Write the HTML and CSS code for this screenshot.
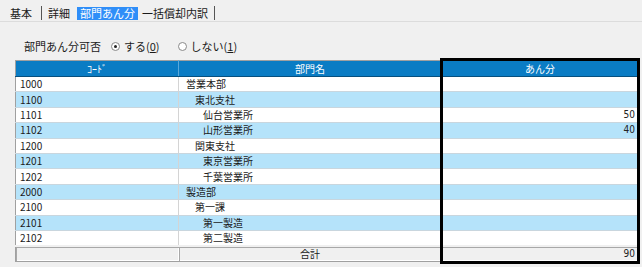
FILE: index.html
```html
<!DOCTYPE html>
<html lang="ja">
<head>
  <meta charset="UTF-8">
  <title>部門あん分</title>
  <link rel="stylesheet" href="styles.css">
</head>
<body>
  <!-- タブ -->
  <div class="tabs">
    <span class="tab">基本</span>
    <span class="tab-sep"></span>
    <span class="tab">詳細</span>
    <span class="tab active">部門あん分</span>
    <span class="tab">一括償却内訳</span>
    <span class="tab-sep"></span>
  </div>

  <div class="panel">
    <!-- あん分可否 -->
    <div class="option-row">
      <span class="option-label">部門あん分可否</span>
      <label class="radio"><span class="radio-mark checked"></span>する(<u>0</u>)</label>
      <label class="radio"><span class="radio-mark"></span>しない(<u>1</u>)</label>
    </div>

    <!-- 一覧 -->
    <div class="grid-wrap">
      <table class="grid">
        <colgroup>
          <col class="col-code">
          <col class="col-name">
          <col class="col-rate">
        </colgroup>
        <thead>
          <tr><th>ｺｰﾄﾞ</th><th>部門名</th><th>あん分</th></tr>
        </thead>
        <tbody>
          <tr><td>1000</td><td class="lv0">営業本部</td><td class="num"></td></tr>
          <tr><td>1100</td><td class="lv1">東北支社</td><td class="num"></td></tr>
          <tr><td>1101</td><td class="lv2">仙台営業所</td><td class="num">50</td></tr>
          <tr><td>1102</td><td class="lv2">山形営業所</td><td class="num">40</td></tr>
          <tr><td>1200</td><td class="lv1">関東支社</td><td class="num"></td></tr>
          <tr><td>1201</td><td class="lv2">東京営業所</td><td class="num"></td></tr>
          <tr><td>1202</td><td class="lv2">千葉営業所</td><td class="num"></td></tr>
          <tr><td>2000</td><td class="lv0">製造部</td><td class="num"></td></tr>
          <tr><td>2100</td><td class="lv1">第一課</td><td class="num"></td></tr>
          <tr><td>2101</td><td class="lv2">第一製造</td><td class="num"></td></tr>
          <tr><td>2102</td><td class="lv2">第二製造</td><td class="num"></td></tr>
        </tbody>
        <tfoot>
          <tr><td></td><td class="center">合計</td><td class="num">90</td></tr>
        </tfoot>
      </table>
      <!-- 強調枠 -->
      <div class="highlight-frame"></div>
    </div>
  </div>
</body>
</html>
```

FILE: styles.css
```css
/* 共通 */
* {
  margin: 0;
  padding: 0;
  box-sizing: border-box;
}
body {
  font-family: "Noto Sans CJK JP", sans-serif;
  font-size: 11px;
  background-color: #f0f0f0;
  color: #1a1a1a;
  width: 642px;
  height: 267px;
  overflow: hidden;
}
/* タブ */
.tabs {
  display: flex;
  align-items: center;
  height: 22px;
  padding: 5px 0 0 7px;
  border-bottom: 1px solid #dcdcdc;
}
.tab {
  height: 13px;
  line-height: 13px;
  padding: 0 3px;
}
.tab:first-child {
  margin-right: 3px;
}
.tab-sep {
  width: 1px;
  height: 14px;
  background-color: #555;
  margin: 0 3px;
}
.tab.active {
  background-color: #2f8ef8;
  color: #fff;
  margin-left: 4px;
  margin-right: 1px;
  padding: 0 3px;
}
/* パネル */
.panel {
  padding: 0 0 0 15px;
}
.option-row {
  display: flex;
  align-items: center;
  height: 38px;
  padding: 10px 0 0 9px;
}
.option-label {
  width: 87px;
}
.radio {
  display: flex;
  align-items: center;
  margin-right: 18px;
}
.radio u {
  text-decoration: underline;
}
.radio-mark {
  width: 9px;
  height: 9px;
  border: 1px solid #8a8a8a;
  border-radius: 50%;
  background-color: #fff;
  margin-right: 4px;
  display: flex;
  align-items: center;
  justify-content: center;
}
.radio-mark.checked::after {
  content: "";
  width: 3px;
  height: 3px;
  border-radius: 50%;
  background-color: #222;
}
/* 一覧 */
.grid-wrap {
  position: relative;
  width: 623px;
}
.grid {
  width: 623px;
  border-collapse: collapse;
  table-layout: fixed;
  border: 1px solid #a0a0a0;
  font-size: 10px;
}
.col-code { width: 163px; }
.col-name { width: 263px; }
.col-rate { width: 197px; }
.grid th {
  background-color: #0a7cc4;
  color: #fff;
  font-weight: normal;
  height: 16px;
  line-height: 14px;
  border-right: 1px solid #5aa8da;
  border-bottom: 1px solid #06507f;
}
.grid td {
  height: 15.4px;
  line-height: 14px;
  padding: 0 4px;
  border-bottom: 1px solid #c9d6de;
  border-right: 1px solid #d4d4d4;
  white-space: nowrap;
}
.grid tbody tr:nth-child(odd) td {
  background-color: #fff;
}
.grid tbody tr:nth-child(even) td {
  background-color: #b5e3fa;
}
.grid td.lv0 { padding-left: 7px; }
.grid td.lv1 { padding-left: 16px; }
.grid td.lv2 { padding-left: 24px; }
.grid td.num {
  text-align: right;
  font-family: "Liberation Sans Narrow", "DejaVu Sans Condensed", sans-serif;
  color: #222;
  padding-right: 3px;
}
.grid td.center {
  text-align: center;
}
/* 合計行 */
.grid tfoot td {
  background-color: #f0f0f0;
  height: 14px;
  border: none;
  box-shadow: inset 1px 1px 0 #a8a8a8, inset -1px -1px 0 #fff;
}
.grid tfoot tr {
  border-top: 2px solid #f0f0f0;
}
/* 強調枠（あん分列を囲む） */
.highlight-frame {
  position: absolute;
  left: 425px;
  top: -2px;
  width: 200px;
  height: 206px;
  border: 3px solid #000;
  pointer-events: none;
}
```
